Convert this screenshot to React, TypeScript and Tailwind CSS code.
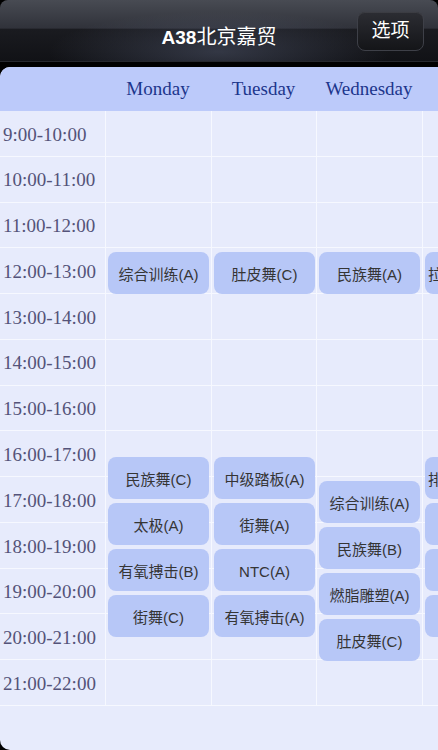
import React from 'react';

const serif = { fontFamily: '"Liberation Serif", "DejaVu Serif", serif' };
const sans = { fontFamily: '"Liberation Sans", "Noto Sans CJK SC", sans-serif' };

const times = [
  '9:00-10:00', '10:00-11:00', '11:00-12:00', '12:00-13:00', '13:00-14:00',
  '14:00-15:00', '15:00-16:00', '16:00-17:00', '17:00-18:00', '18:00-19:00',
  '19:00-20:00', '20:00-21:00', '21:00-22:00',
];

type Lesson = { top: number; name: string };
type Day = { name: string; width: number; lessons: Lesson[] };

const stack = (start: number, names: string[]): Lesson[] =>
  names.map((name, i) => ({ top: start + i * 46, name }));

const days: Day[] = [
  {
    name: 'Monday',
    width: 106,
    lessons: [{ top: 141, name: '综合训练(A)' }, ...stack(346, ['民族舞(C)', '太极(A)', '有氧搏击(B)', '街舞(C)'])],
  },
  {
    name: 'Tuesday',
    width: 105,
    lessons: [{ top: 141, name: '肚皮舞(C)' }, ...stack(346, ['中级踏板(A)', '街舞(A)', 'NTC(A)', '有氧搏击(A)'])],
  },
  {
    name: 'Wednesday',
    width: 106,
    lessons: [{ top: 141, name: '民族舞(A)' }, ...stack(370, ['综合训练(A)', '民族舞(B)', '燃脂雕塑(A)', '肚皮舞(C)'])],
  },
  {
    name: 'Thursday',
    width: 106,
    lessons: [{ top: 141, name: '拉丁健身操(A)' }, ...stack(346, ['排舞健身操(A)', '瑜伽(A)', '普拉提(A)', '街舞(B)'])],
  },
];

function NavBar() {
  return (
    <div className="relative grid h-[62px] grid-cols-[1fr_auto_1fr] items-center rounded-t-[8px] border-b border-[#26282e] bg-[linear-gradient(to_bottom,#484b53_0%,#30323a_46%,#1a1b20_48%,#111216_100%)] px-[14px]">
      <div className="pointer-events-none absolute inset-0 rounded-t-[8px] bg-[radial-gradient(ellipse_at_50%_85%,rgba(110,120,150,0.35),transparent_55%)]" />
      <div />
      <div className="relative mt-[14px] flex items-baseline text-white" style={sans}>
        <span className="text-[19px] font-bold">A38</span>
        <span className="text-[20px]">北京嘉贸</span>
      </div>
      <div className="relative justify-self-end">
        <button
          className="mt-[1px] flex h-[40px] w-[67px] items-center justify-center rounded-[8px] border border-[#3e4048] bg-[linear-gradient(to_bottom,#2c2d33,#141518)] text-[19px] text-white shadow-[inset_0_1px_0_rgba(255,255,255,0.08)]"
          style={sans}
        >
          选项
        </button>
      </div>
    </div>
  );
}

function DayColumn({ day }: { day: Day }) {
  return (
    <div className="relative shrink-0 border-l border-[#f6f8ff]" style={{ width: day.width }}>
      {times.map((t) => (
        <div key={t} className="h-[45.77px] border-b border-[#f6f8ff]" />
      ))}
      {day.lessons.map((l) => (
        <div
          key={l.name + l.top}
          className="absolute left-[2px] flex h-[42px] w-[101px] items-center justify-center overflow-visible whitespace-nowrap rounded-[8px] bg-[#b7c7f7] pt-[4px] text-[15px] text-[#353535]"
          style={{ top: l.top, ...sans }}
        >
          {l.name}
        </div>
      ))}
    </div>
  );
}

export default function App() {
  return (
    <div className="h-[750px] w-[438px] overflow-hidden bg-black">
      <NavBar />
      <div className="mt-[5px] h-[683px] w-[560px] overflow-hidden rounded-l-[10px] bg-[#e7ebfc]">
        <div className="flex h-[44px] bg-[#bccafa]" style={serif}>
          <div className="w-[105px] shrink-0" />
          {days.map((d) => (
            <div
              key={d.name}
              className="flex shrink-0 items-center justify-center pt-[1px] text-[19px] text-[#1c368c]"
              style={{ width: d.width }}
            >
              {d.name}
            </div>
          ))}
        </div>
        <div className="flex">
          <div className="w-[105px] shrink-0">
            {times.map((t) => (
              <div
                key={t}
                className="flex h-[45.77px] items-center border-b border-[#f6f8ff] pl-[3px] pt-[3px] text-[19px] text-[#545379]"
                style={serif}
              >
                {t}
              </div>
            ))}
          </div>
          {days.map((d) => (
            <DayColumn key={d.name} day={d} />
          ))}
        </div>
      </div>
    </div>
  );
}
